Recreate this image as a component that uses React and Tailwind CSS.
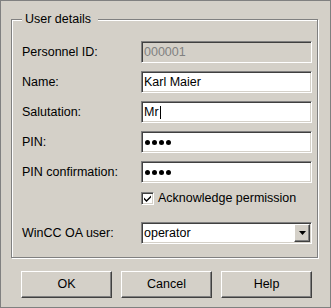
const sunken =
  'border border-t-[#808080] border-l-[#808080] border-b-white border-r-white shadow-[inset_1px_1px_0_#404040,inset_-1px_-1px_0_#d4d0c8]'
const raised =
  'border border-t-white border-l-white border-b-[#404040] border-r-[#404040] shadow-[inset_-1px_-1px_0_#808080]'

function Row({ label, children }) {
  return (
    <div className="flex items-center h-[22px]">
      <span className="w-[119px] shrink-0 whitespace-nowrap">{label}</span>
      {children}
    </div>
  )
}

function Field({ children, disabled }) {
  return (
    <div
      className={`w-[171px] h-[22px] flex items-center pl-[2px] ${sunken} ${
        disabled ? 'bg-[#d4d0c8] text-[#808080]' : 'bg-white'
      }`}
    >
      {children}
    </div>
  )
}

function Dots() {
  return (
    <div className="flex gap-[2px] pl-[1px]">
      {[0, 1, 2, 3].map(i => (
        <span key={i} className="w-[5px] h-[5px] rounded-full bg-black" />
      ))}
    </div>
  )
}

export default function App() {
  return (
    <div className="w-[331px] h-[308px] bg-[#d4d0c8] border border-[#808080] text-[12.5px] leading-[15px] text-black font-['Liberation_Sans',Arial,sans-serif]">
      {/* User details group */}
      <div className="relative ml-[10px] mt-[18px] w-[307px] h-[239px] border border-[#808080] shadow-[inset_1px_1px_0_white,1px_1px_0_white]">
        <span className="absolute left-[10px] top-[-8px] pl-[3px] pr-[7px] bg-[#d4d0c8]">
          User details
        </span>

        <div className="flex flex-col gap-[8px] pt-[21px] pl-[10px]">
          <Row label="Personnel ID:">
            <Field disabled>000001</Field>
          </Row>
          <Row label="Name:">
            <Field>Karl Maier</Field>
          </Row>
          <Row label="Salutation:">
            <Field>
              Mr
              <span className="w-px h-[13px] bg-black ml-[1px]" />
            </Field>
          </Row>
          <Row label="PIN:">
            <Field>
              <Dots />
            </Field>
          </Row>
          <Row label="PIN confirmation:">
            <Field>
              <Dots />
            </Field>
          </Row>

          <div className="flex items-center h-[15px] pl-[119px] gap-[4px]">
            <div className={`w-[13px] h-[13px] bg-white flex items-center justify-center ${sunken}`}>
              <svg width="9" height="9" viewBox="0 0 9 9">
                <path d="M1 3.5 L3.5 6 L8 1.5 L8 3.5 L3.5 8 L1 5.5 Z" fill="black" />
              </svg>
            </div>
            <span className="whitespace-nowrap">Acknowledge permission</span>
          </div>

          <div className="mt-[8px]">
            <Row label="WinCC OA user:">
              <div className={`w-[171px] h-[22px] flex items-center bg-white ${sunken}`}>
                <span className="flex-1 pl-[2px]">operator</span>
                <div
                  className={`w-[16px] h-[18px] mr-[1px] bg-[#d4d0c8] flex items-center justify-center ${raised}`}
                >
                  <svg width="7" height="4" viewBox="0 0 7 4">
                    <path d="M0 0 H7 L3.5 4 Z" fill="black" />
                  </svg>
                </div>
              </div>
            </Row>
          </div>
        </div>
      </div>

      {/* Dialog buttons */}
      <div className="flex gap-[9px] ml-[20px] mt-[13px]">
        {['OK', 'Cancel', 'Help'].map(b => (
          <div
            key={b}
            className={`w-[91px] h-[27px] flex items-center justify-center bg-[#d4d0c8] ${raised}`}
          >
            {b}
          </div>
        ))}
      </div>
    </div>
  )
}
